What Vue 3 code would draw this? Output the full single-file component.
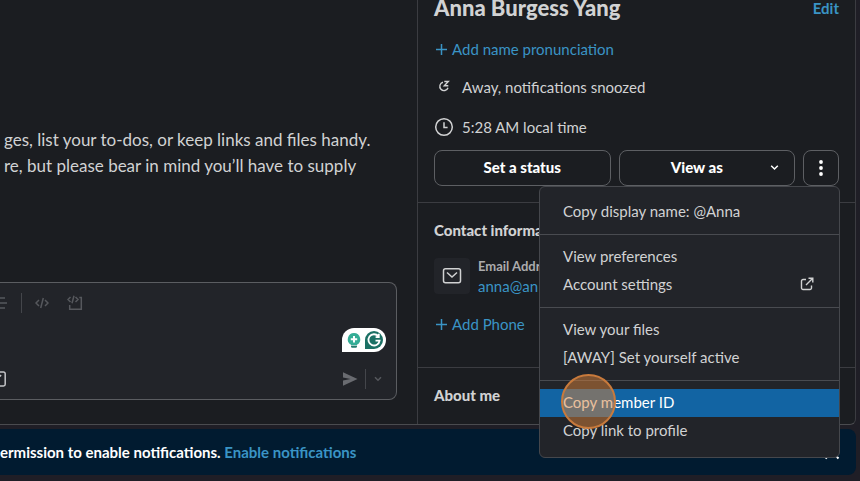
<script setup>
import { ref } from 'vue'

const draft = ref('')
const activeItem = ref('Copy member ID')
const menuGroups = [
  [{ label: 'Copy display name: @Anna' }],
  [{ label: 'View preferences' }, { label: 'Account settings', external: true }],
  [{ label: 'View your files' }, { label: '[AWAY] Set yourself active' }],
  [{ label: 'Copy member ID' }, { label: 'Copy link to profile' }],
]
</script>

<template>
  <div class="app">
    <div class="workspace">
      <main class="conversation">
        <p class="intro">
          ges, list your to-dos, or keep links and files handy.<br />
          re, but please bear in mind you’ll have to supply
        </p>

        <form class="composer" @submit.prevent>
          <div class="toolbar">
            <button type="button" class="icon-btn list-btn" aria-label="Bulleted list">
              <svg width="8" height="14" viewBox="0 0 8 14"><path d="M0 2h5M0 7h7M0 12h5" /></svg>
            </button>
            <span class="bar"></span>
            <button type="button" class="icon-btn code-btn" aria-label="Code">
              <svg width="14" height="12" viewBox="0 0 14 12"><path d="M4 3 1 6l3 3M10 3l3 3-3 3M8.300 1 5.700 11" /></svg>
            </button>
            <button type="button" class="icon-btn block-btn" aria-label="Code block">
              <svg width="16" height="16" viewBox="0 0 16 16"><path d="M3.500 2 1 4.500 3.500 7M8.500 2 11 4.500 8.500 7M7 .8 5 8.300M12.300 2.500h2v11.800H2.700V10" /></svg>
            </button>
          </div>
          <textarea v-model="draft" aria-label="Message"></textarea>
          <div class="composer-foot">
            <button type="button" class="icon-btn shortcut-btn" aria-label="Shortcuts">
              <svg width="7" height="16" viewBox="0 0 7 16"><path d="M0 1h3.500A1.700 1.700 0 0 1 5.200 2.700v10.600A1.700 1.700 0 0 1 3.500 15H0M0 5.500 1 4" /></svg>
            </button>
            <button type="submit" class="icon-btn send-btn" aria-label="Send">
              <svg width="16" height="16" viewBox="0 0 16 16"><path class="solid" d="M1 1.200 15.500 8 1 14.800V9.400L8.500 8 1 6.600z" /></svg>
            </button>
            <span class="bar"></span>
            <button type="button" class="icon-btn later-btn" aria-label="Schedule for later">
              <svg width="8" height="6" viewBox="0 0 8 6"><path d="m1 1.300 3 3 3-3" /></svg>
            </button>
          </div>
          <button type="button" class="assistant" aria-label="Writing assistant">
            <svg width="44" height="24" viewBox="0 0 44 24">
              <path class="pill" d="M0 24V12A12 12 0 0 1 12 0h20a12 12 0 0 1 0 24z" />
              <path class="bulb" d="M12 5a6.300 6.300 0 0 1 3 11.800v.4H9v-.4A6.300 6.300 0 0 1 12 5z" />
              <path class="bulb-base" d="M9 17.800h6v.7a1.300 1.300 0 0 1-1.300 1.300h-3.400A1.300 1.300 0 0 1 9 18.500z" />
              <path class="bulb-star" d="M12 8v6.400M8.800 11.200h6.400" />
              <path class="drop" d="M23 21v-9a9 9 0 1 1 9 9z" />
              <path class="ring" d="M36.300 8.200A5.600 5.600 0 1 0 37.600 12.600H33.500M36.800 5.800v3.400h-3.200" />
            </svg>
          </button>
        </form>
      </main>

      <aside class="profile">
        <section class="summary">
          <header class="name-row">
            <h1>Anna Burgess Yang</h1>
            <a href="#edit" class="edit">Edit</a>
          </header>
          <a href="#pronunciation" class="add">
            <svg width="13" height="13" viewBox="0 0 13 13"><path d="M6.500 1v11M1 6.500h11" /></svg>Add name pronunciation
          </a>
          <div class="fact">
            <svg width="20" height="20" viewBox="0 0 20 20">
              <path class="snooze" d="M9 5.300a4.200 4.200 0 1 0 5 5.400M10.300 4.500h4l-4 4.200h4" />
            </svg>
            <span>Away, notifications snoozed</span>
          </div>
          <div class="fact">
            <svg width="20" height="20" viewBox="0 0 20 20">
              <circle cx="10" cy="10" r="8.300" /><path d="M10 5.200V10.500h3.600" />
            </svg>
            <span>5:28 AM local time</span>
          </div>
          <div class="actions">
            <button type="button" class="btn">Set a status</button>
            <button type="button" class="btn view-as">
              View as
              <svg class="caret" width="9" height="7" viewBox="0 0 9 7"><path d="m1.200 1.700 3.300 3.300 3.300-3.300" /></svg>
            </button>
            <button type="button" class="btn more" aria-label="More actions" aria-expanded="true">
              <svg width="4" height="18" viewBox="0 0 4 18">
                <circle cx="2" cy="3" r="1.900" /><circle cx="2" cy="9" r="1.900" /><circle cx="2" cy="15" r="1.900" />
              </svg>
            </button>

            <div class="menu" role="menu">
              <div v-for="(group, i) in menuGroups" :key="i" class="group">
                <button
                  v-for="item in group"
                  :key="item.label"
                  type="button"
                  role="menuitem"
                  class="item"
                  :class="{ active: item.label === activeItem }"
                  @mouseenter="activeItem = item.label"
                >
                  {{ item.label }}
                  <svg v-if="item.external" width="14" height="14" viewBox="0 0 14 14">
                    <path d="M6 2.500H3A1.500 1.500 0 0 0 1.500 4v7A1.500 1.500 0 0 0 3 12.500h7a1.500 1.500 0 0 0 1.500-1.500V8.500M8.500 1.200h4.300v4.300M12.500 1.500 6 8" />
                  </svg>
                </button>
              </div>
              <span class="click-marker"></span>
            </div>
          </div>
        </section>

        <section class="contact">
          <h2>Contact information</h2>
          <div class="email">
            <span class="tile">
              <svg width="20" height="18" viewBox="0 0 20 18">
                <rect x="1.500" y="1.800" width="17" height="14" rx="2" /><path d="m5 5.500 5 4.500 5-4.500" />
              </svg>
            </span>
            <div class="email-text">
              <span class="label">Email Address</span>
              <a href="#email">anna@an</a>
            </div>
          </div>
          <a href="#phone" class="add">
            <svg width="13" height="13" viewBox="0 0 13 13"><path d="M6.500 1v11M1 6.500h11" /></svg>Add Phone
          </a>
        </section>

        <section class="about">
          <h2>About me</h2>
        </section>
      </aside>
    </div>

    <div class="banner" role="status">
      <p>ermission to enable notifications. <a href="#enable">Enable notifications</a></p>
      <button type="button" class="close" aria-label="Dismiss">
        <svg width="16" height="18" viewBox="0 0 16 18"><path d="m1.500 2.500 13 13M14.500 2.500l-13 13" /></svg>
      </button>
    </div>
  </div>
</template>

<style>
body {
  background: #1e1d25;
}
</style>

<style scoped>
* {
  box-sizing: border-box;
}
.app {
  min-height: 100vh;
  display: flex;
  flex-direction: column;
  gap: 4px;
  padding: 0 4px 6px 0;
  overflow: hidden;
  background: #1f1e26;
  color: #d1d2d3;
  font: 15px/20px Lato, "Open Sans", sans-serif;
}
h1, h2, p {
  margin: 0;
}
button {
  font: inherit;
  color: inherit;
  background: none;
  border: 0;
  padding: 0;
}
a {
  color: #3a94c5;
  text-decoration: none;
}
svg {
  display: block;
  flex: none;
  fill: none;
  stroke: currentColor;
  stroke-width: 1.5px;
}
.workspace {
  flex: 1;
  display: grid;
  grid-template-columns: minmax(0, 417fr) minmax(0, 438fr);
  background: #1b1d21;
  border-right: 1px solid #3b3c41;
  border-bottom: 1px solid #4a4b4f;
  border-bottom-right-radius: 6px;
}
.conversation {
  display: flex;
  flex-direction: column;
  justify-content: space-between;
  padding: 127px 20px 24px 0;
}
.intro {
  padding-left: 4px;
  font-size: 17px;
  line-height: 26px;
  white-space: nowrap;
}
.composer {
  position: relative;
  display: flex;
  flex-direction: column;
  height: 118px;
  background: #222429;
  border: 1px solid #5b5d61;
  border-left: 0;
  border-radius: 0 8px 8px 0;
}
.toolbar,
.composer-foot {
  display: flex;
  align-items: center;
  height: 40px;
  color: #56585d;
}
.bar {
  width: 1px;
  height: 20px;
  background: #44464b;
}
.list-btn {
  margin-right: 13px;
}
.code-btn {
  margin: 0 18px 0 13px;
}
textarea {
  flex: 1;
  min-height: 0;
  border: 0;
  outline: 0;
  resize: none;
  background: none;
  color: inherit;
  font: inherit;
}
.shortcut-btn {
  margin-right: auto;
  color: #c4c5c8;
}
.send-btn {
  margin-right: 7px;
  color: #696b70;
}
.solid {
  fill: currentColor;
  stroke: none;
}
.later-btn {
  margin: 0 14px 0 8px;
}
.assistant {
  position: absolute;
  right: 10px;
  bottom: 47px;
}
.assistant svg {
  stroke: none;
}
.assistant .pill {
  fill: #fff;
}
.assistant .bulb {
  fill: #35ad96;
}
.assistant .bulb-base {
  fill: #237b6c;
}
.assistant .bulb-star {
  stroke: #fff;
  stroke-width: 2px;
}
.assistant .drop {
  fill: #1b7064;
}
.assistant .ring {
  stroke: #fff;
  stroke-width: 1.8px;
}
.profile {
  border-left: 1px solid #3b3c41;
}
.summary {
  padding: 0 16px 16px;
}
.name-row {
  display: flex;
  justify-content: space-between;
  align-items: center;
  height: 15px;
  margin-bottom: 24px;
}
h1 {
  font-size: 22px;
  line-height: 30px;
  font-weight: 900;
}
.edit {
  font-weight: 700;
}
.add {
  display: flex;
  align-items: center;
  gap: 4px;
}
.add svg {
  margin-left: 1px;
}
.fact {
  display: flex;
  align-items: center;
  gap: 8px;
  margin-top: 18px;
}
.fact + .fact {
  margin-top: 20px;
}
.snooze {
  stroke-width: 1.4px;
}
.actions {
  position: relative;
  display: grid;
  grid-template-columns: 1fr 1fr 36px;
  gap: 8px;
  margin-top: 13px;
}
.btn {
  position: relative;
  display: flex;
  align-items: center;
  justify-content: center;
  height: 36px;
  padding-bottom: 2px;
  border: 1px solid #5d5f63;
  border-radius: 8px;
  color: #fff;
  font-weight: 900;
}
.view-as {
  padding-right: 20px;
}
.caret {
  position: absolute;
  right: 15px;
}
.more {
  padding-bottom: 0;
}
.more svg {
  fill: #fff;
  stroke: none;
}
.menu {
  position: absolute;
  z-index: 2;
  top: 100%;
  right: -1px;
  width: 301px;
  padding: 11px 0 12px;
  background: #222429;
  border: 1px solid #45474c;
  border-radius: 6px;
}
.group + .group {
  margin-top: 8px;
  padding-top: 8px;
  border-top: 1px solid #494b50;
}
.item {
  display: flex;
  align-items: center;
  justify-content: space-between;
  width: 100%;
  height: 28px;
  padding: 0 25px 2px 23px;
  text-align: left;
}
.item svg {
  stroke-width: 1.4px;
}
.active {
  background: #1264a3;
  color: #fff;
}
.click-marker {
  position: absolute;
  left: 21px;
  bottom: 28px;
  width: 55px;
  height: 55px;
  border: 2px solid #c87a3c;
  border-radius: 50%;
  background: rgba(214, 128, 58, 0.5);
  pointer-events: none;
}
.contact {
  padding: 17px 16px 33px;
  border-top: 1px solid #3b3c41;
}
h2 {
  font-size: 15px;
  line-height: 20px;
  font-weight: 900;
}
.email {
  display: flex;
  gap: 8px;
  margin: 18px 0;
}
.tile {
  display: grid;
  place-items: center;
  width: 36px;
  height: 36px;
  border-radius: 4px;
  background: #222429;
}
.email-text {
  display: flex;
  flex-direction: column;
  gap: 2px;
}
.label {
  font-size: 13px;
  line-height: 16px;
  font-weight: 700;
  color: #ababad;
}
.about {
  padding: 17px 16px 19px;
  border-top: 1px solid #3b3c41;
}
.banner {
  display: flex;
  align-items: center;
  justify-content: space-between;
  height: 46px;
  padding-right: 16px;
  background: #011b30;
  border-radius: 0 8px 8px 0;
  color: #fff;
  font-weight: 700;
}
.close svg {
  stroke-width: 2px;
}
</style>
